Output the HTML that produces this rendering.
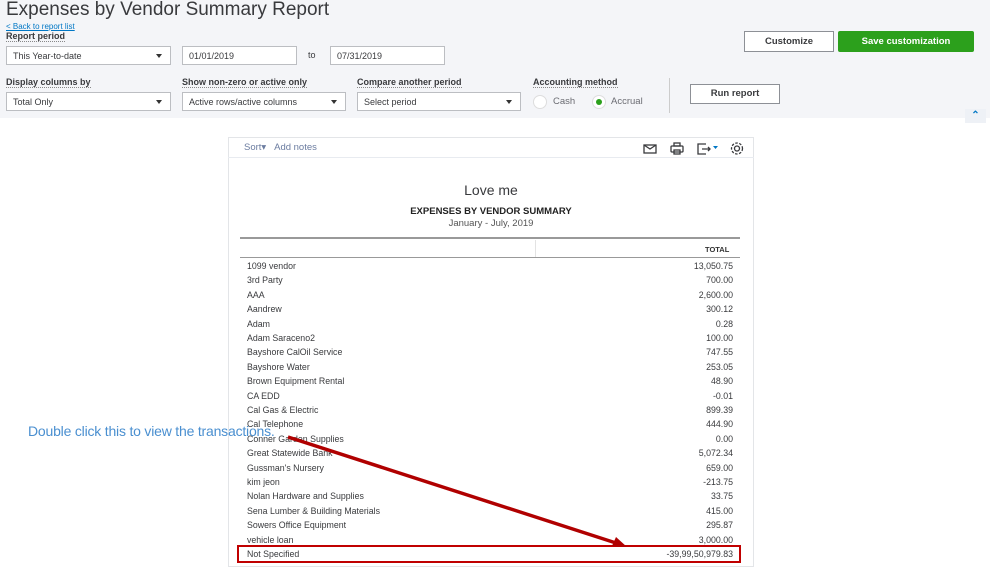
<!DOCTYPE html>
<html><head><meta charset="utf-8"><style>
*{margin:0;padding:0;box-sizing:border-box}
body{width:999px;height:562px;overflow:hidden;background:#fff;font-family:"Liberation Sans",sans-serif;position:relative;color:#393a3d}
.a{position:absolute;white-space:nowrap}
.top{position:absolute;left:0;top:0;width:990px;height:118px;background:#f4f5f8}
.lbl{font-size:9px;font-weight:bold;color:#393a3d;border-bottom:1px dotted #888}
.box{position:absolute;height:19px;background:#fff;border:1px solid #bcbec2;font-size:9px;padding:4px 6px;color:#393a3d}
.dd:after{content:"";position:absolute;right:8px;top:7px;border:3.5px solid transparent;border-top:4px solid #333}
.row{position:absolute;left:247px;width:486px;font-size:8.8px;color:#393a3d}
.row span{position:absolute;right:0}
</style></head><body>
<div class="top"></div>
<div class="a" style="left:6px;top:-1px;font-size:19px;color:#393a3d">Expenses by Vendor Summary Report</div>
<div class="a" style="left:6px;top:22px;font-size:8px;color:#0077c5;text-decoration:underline">&lt; Back to report list</div>
<div class="a lbl" style="left:6px;top:31px">Report period</div>
<div class="box dd" style="left:6px;top:46px;width:165px">This Year-to-date</div>
<div class="box" style="left:182px;top:46px;width:115px">01/01/2019</div>
<div class="a" style="left:308px;top:50px;font-size:9px">to</div>
<div class="box" style="left:330px;top:46px;width:115px">07/31/2019</div>
<div class="a lbl" style="left:6px;top:77px">Display columns by</div>
<div class="a lbl" style="left:182px;top:77px">Show non-zero or active only</div>
<div class="a lbl" style="left:357px;top:77px">Compare another period</div>
<div class="a lbl" style="left:533px;top:77px">Accounting method</div>
<div class="box dd" style="left:6px;top:92px;width:165px">Total Only</div>
<div class="box dd" style="left:182px;top:92px;width:164px">Active rows/active columns</div>
<div class="box dd" style="left:357px;top:92px;width:164px">Select period</div>
<div class="a" style="left:533px;top:95px;width:14px;height:14px;border-radius:50%;background:#fff;border:1px solid #ddd"></div>
<div class="a" style="left:553px;top:96px;font-size:9.5px;color:#6b6c72">Cash</div>
<div class="a" style="left:592px;top:95px;width:14px;height:14px;border-radius:50%;background:#fff;border:1px solid #ddd"></div>
<div class="a" style="left:596px;top:99px;width:6px;height:6px;border-radius:50%;background:#2ca01c"></div>
<div class="a" style="left:611px;top:96px;font-size:9.5px;color:#6b6c72">Accrual</div>
<div class="a" style="left:669px;top:78px;width:1px;height:35px;background:#ccc"></div>
<div class="a" style="left:690px;top:84px;width:90px;height:20px;border:1px solid #8d9096;background:#fff;font-size:9.5px;font-weight:bold;text-align:center;line-height:18px">Run report</div>
<div class="a" style="left:744px;top:31px;width:90px;height:21px;border:1px solid #8d9096;background:#fff;font-size:9.5px;font-weight:bold;text-align:center;line-height:19px">Customize</div>
<div class="a" style="left:838px;top:31px;width:136px;height:21px;background:#2ca01c;color:#fff;border-radius:2px;font-size:9.5px;font-weight:bold;text-align:center;line-height:21px">Save customization</div>
<div class="a" style="left:965px;top:109px;width:21px;height:14px;background:#eef1f6;color:#0077c5;font-size:10px;text-align:center;line-height:14px;font-weight:bold">&#8963;</div>
<div class="a" style="left:228px;top:137px;width:526px;height:430px;border:1px solid #e3e5e8"></div>
<div class="a" style="left:228px;top:157px;width:526px;height:1px;background:#e8ebf0"></div>
<div class="a" style="left:244px;top:142px;font-size:9.5px;color:#6b7ca0">Sort&#9662;&nbsp;&nbsp;&nbsp;Add notes</div>
<svg class="a" style="left:640px;top:140px" width="110" height="16" viewBox="0 0 110 16" fill="none" stroke="#393a3d" stroke-width="1.3">
<rect x="4" y="5" width="12" height="8"/><path d="M4 5l6 4 6-4"/>
<rect x="31" y="6" width="12" height="6" rx="1"/><rect x="34" y="3" width="6" height="3"/><rect x="34" y="10" width="6" height="4"/>
<path d="M66 4h-8v10h8M62 9h8M68 7l2 2-2 2"/><path d="M73 6h5l-2.5 3z" fill="#0077c5" stroke="none"/>
<circle cx="97" cy="8.5" r="2.5"/><circle cx="97" cy="8.5" r="5.5" stroke-dasharray="2.5 1.5"/>
</svg>
<div class="a" style="left:228px;top:182px;width:526px;text-align:center;font-size:14px;color:#393a3d">Love me</div>
<div class="a" style="left:228px;top:206px;width:526px;text-align:center;font-size:9.5px;font-weight:bold;color:#222">EXPENSES BY VENDOR SUMMARY</div>
<div class="a" style="left:228px;top:218px;width:526px;text-align:center;font-size:9.5px;color:#555">January - July, 2019</div>
<div class="a" style="left:240px;top:237px;width:500px;height:2px;background:#999"></div>
<div class="a" style="left:535px;top:240px;width:1px;height:17px;background:#e3e3e3"></div>
<div class="a" style="left:705px;top:245px;font-size:7.5px;font-weight:bold;color:#333">TOTAL</div>
<div class="a" style="left:240px;top:257px;width:500px;height:1px;background:#999"></div>
<div class="row" style="top:261px">1099 vendor<span>13,050.75</span></div>
<div class="row" style="top:275.4px">3rd Party<span>700.00</span></div>
<div class="row" style="top:289.8px">AAA<span>2,600.00</span></div>
<div class="row" style="top:304.2px">Aandrew<span>300.12</span></div>
<div class="row" style="top:318.6px">Adam<span>0.28</span></div>
<div class="row" style="top:333px">Adam Saraceno2<span>100.00</span></div>
<div class="row" style="top:347.4px">Bayshore CalOil Service<span>747.55</span></div>
<div class="row" style="top:361.8px">Bayshore Water<span>253.05</span></div>
<div class="row" style="top:376.2px">Brown Equipment Rental<span>48.90</span></div>
<div class="row" style="top:390.6px">CA EDD<span>-0.01</span></div>
<div class="row" style="top:405px">Cal Gas &amp; Electric<span>899.39</span></div>
<div class="row" style="top:419.4px">Cal Telephone<span>444.90</span></div>
<div class="row" style="top:433.8px">Conner Garden Supplies<span>0.00</span></div>
<div class="row" style="top:448.2px">Great Statewide Bank<span>5,072.34</span></div>
<div class="row" style="top:462.6px">Gussman's Nursery<span>659.00</span></div>
<div class="row" style="top:477px">kim jeon<span>-213.75</span></div>
<div class="row" style="top:491.4px">Nolan Hardware and Supplies<span>33.75</span></div>
<div class="row" style="top:505.8px">Sena Lumber &amp; Building Materials<span>415.00</span></div>
<div class="row" style="top:520.2px">Sowers Office Equipment<span>295.87</span></div>
<div class="row" style="top:534.6px">vehicle loan<span>3,000.00</span></div>
<div class="row" style="top:549px">Not Specified<span>-39,99,50,979.83</span></div>
<div class="a" style="left:237px;top:545px;width:504px;height:18px;border:2px solid #c00000"></div>
<div class="a" style="left:28px;top:423px;font-size:14px;color:#4a8fd0;letter-spacing:-0.2px">Double click this to view the transactions.</div>
<svg class="a" style="left:0;top:0" width="999" height="562"><line x1="288" y1="437" x2="616" y2="543" stroke="#b00000" stroke-width="3.5"/><path d="M627 547l-15-1 4-9z" fill="#b00000"/></svg>
</body></html>
